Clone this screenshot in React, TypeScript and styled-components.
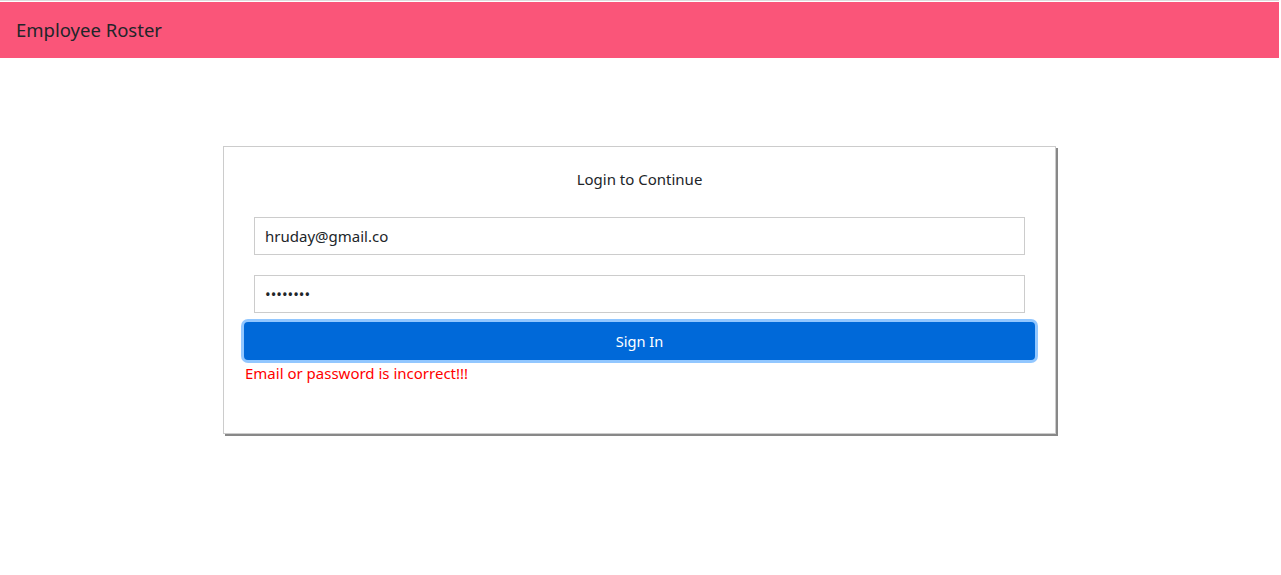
import React from "react";
import styled, { createGlobalStyle } from "styled-components";

const GlobalStyle = createGlobalStyle`
  html, body { margin: 0; padding: 0; background: #fff; }
  body {
    font-family: "Noto Sans", "Open Sans", Arial, sans-serif;
    color: #212529;
  }
  * { box-sizing: border-box; }
`;

const Page = styled.div`
  min-height: 575px;
  width: calc(100% - 2px);
  border-top: 1px solid #dcdcdc;
  padding-top: 1px;
`;

const Navbar = styled.header`
  height: 56px;
  background: #fa5579;
  display: flex;
  align-items: center;
  padding: 0 16px;
`;

const Brand = styled.span`
  font-size: 18.5px;
  color: #212529;
  line-height: 1;
`;

const Card = styled.form`
  width: 833px;
  margin: 88px auto 0;
  border: 1px solid #cccccc;
  box-shadow: 2px 2px 0 #888888;
  padding: 20px 20px 48px;
  display: flex;
  flex-direction: column;
`;

const Title = styled.div`
  text-align: center;
  font-size: 15px;
  line-height: 24px;
  margin-bottom: 26px;
`;

const Input = styled.input<{ $gap: number }>`
  display: block;
  margin: 0 10px ${(p) => p.$gap}px;
  height: 38px;
  border: 1px solid #cccccc;
  padding: 0 10px;
  font-family: inherit;
  font-size: 15px;
  color: #212529;
  outline: none;
  background: #fff;
`;

const Button = styled.button`
  height: 38px;
  border: none;
  border-radius: 4px;
  background: #0069d9;
  color: #fff;
  font-family: inherit;
  font-size: 14.6px;
  box-shadow: 0 0 0 3px rgba(38, 143, 255, 0.5);
  cursor: pointer;
`;

const ErrorText = styled.div`
  color: #ff0000;
  font-size: 15px;
  line-height: 24px;
  margin-top: 1px;
  margin-left: 1px;
`;

export default function App() {
  return (
    <Page>
      <GlobalStyle />
      <Navbar>
        <Brand>Employee Roster</Brand>
      </Navbar>
      <Card onSubmit={(e) => e.preventDefault()}>
        <Title>Login to Continue</Title>
        <Input $gap={20} type="email" defaultValue="hruday@gmail.co" />
        <Input $gap={9} type="password" defaultValue="12345678" />
        <Button type="submit">Sign In</Button>
        <ErrorText>Email or password is incorrect!!!</ErrorText>
      </Card>
    </Page>
  );
}
